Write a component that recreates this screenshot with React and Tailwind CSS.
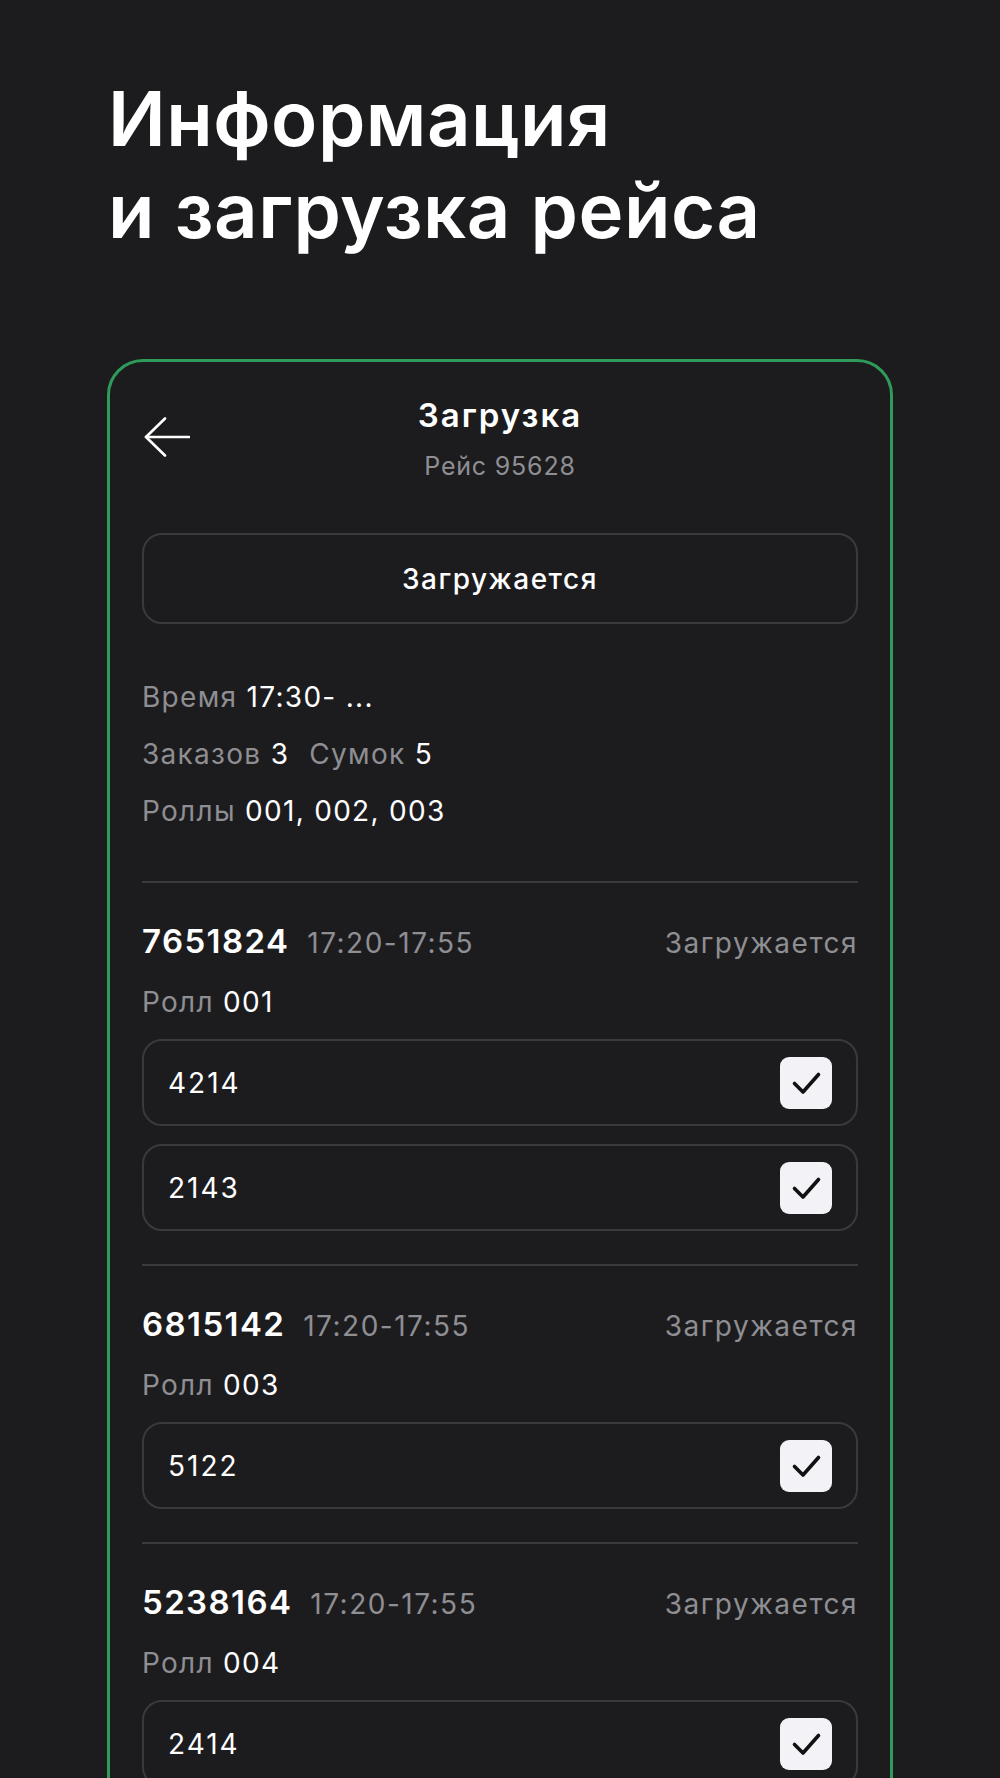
const orders = [
    { id: '7651824', time: '17:20-17:55', roll: '001', items: ['4214', '2143'] },
    { id: '6815142', time: '17:20-17:55', roll: '003', items: ['5122'] },
    { id: '5238164', time: '17:20-17:55', roll: '004', items: ['2414', '3121'] },
];

const BackArrow = () => (
    <svg width="48" height="40" viewBox="0 0 48 40" fill="none" stroke="white" strokeWidth="2.6" strokeLinecap="round" strokeLinejoin="round">
        <path d="M4 20H47" />
        <path d="M23 1.5L4 20L23 38.5" />
    </svg>
);

const CheckBox = () => (
    <div className="w-[52px] h-[52px] rounded-[9px] bg-[#f2f2f7] flex items-center justify-center shrink-0">
        <svg width="52" height="52" viewBox="0 0 52 52" fill="none" stroke="#111" strokeWidth="3.6" strokeLinecap="round" strokeLinejoin="round">
            <path d="M14.5 26.5L23 35L38.5 17.5" />
        </svg>
    </div>
);

const Order = ({ order }) => (
    <div className="border-t-2 border-[#3a3a3c] pt-[38px] pb-[33px]">
        {/* Order header */}
        <div className="flex items-baseline">
            <span className="text-[33px] leading-[40px] font-semibold tracking-[1.4px] text-white">{order.id}</span>
            <span className="ml-[18px] text-[28px] leading-[40px] tracking-[1.5px] text-[#8e8e93]">{order.time}</span>
            <span className="ml-auto text-[28px] leading-[40px] tracking-[1.5px] text-[#8e8e93]">Загружается</span>
        </div>
        <div className="mt-[19px] text-[28px] leading-[40px] tracking-[1.3px]">
            <span className="text-[#8e8e93]">Ролл </span>
            <span className="text-white">{order.roll}</span>
        </div>
        <div className="mt-[17px] flex flex-col gap-[18px]">
            {order.items.map((item) => (
                <div key={item} className="h-[87px] rounded-[20px] border-2 border-[#3a3a3c] flex items-center justify-between pl-[24px] pr-[24px]">
                    <span className="text-[28px] tracking-[2px] text-white">{item}</span>
                    <CheckBox />
                </div>
            ))}
        </div>
    </div>
);

export default function App() {
    return (
        <div className="w-[1000px] h-[1778px] overflow-hidden bg-[#1c1c1e] font-['Inter',sans-serif]">
            <div className="pl-[108px] pt-[72px]">
                <h1 className="text-[76px] leading-[92px] font-semibold text-white tracking-[0.5px]">
                    Информация
                    <br />
                    и загрузка рейса
                </h1>
            </div>

            <div className="mt-[103px] ml-[107px] w-[786px] rounded-[36px] border-[3px] border-[#2e9b5a] px-[32px] pt-[33px]">
                {/* Header */}
                <div className="grid grid-cols-[60px_1fr_60px] items-center">
                    <div className="flex items-center -mt-[4px]">
                        <BackArrow />
                    </div>
                    <div className="flex flex-col items-center">
                        <span className="text-[33px] leading-[40px] font-semibold tracking-[2px] text-white">Загрузка</span>
                        <span className="mt-[15px] text-[25px] leading-[32px] tracking-[0.8px] text-[#8e8e93]">Рейс 95628</span>
                    </div>
                    <div />
                </div>

                <button className="mt-[51px] w-full h-[91px] rounded-[20px] border-2 border-[#3a3a3c] text-[28px] font-medium tracking-[1.5px] text-white">
                    Загружается
                </button>

                {/* Trip info */}
                <div className="mt-[45px] mb-[41px] text-[28px] leading-[57px] tracking-[1.3px]">
                    <div>
                        <span className="text-[#8e8e93]">Время </span>
                        <span className="text-white">17:30- ...</span>
                    </div>
                    <div>
                        <span className="text-[#8e8e93]">Заказов </span>
                        <span className="text-white mr-[20px]">3</span>
                        <span className="text-[#8e8e93]">Сумок </span>
                        <span className="text-white">5</span>
                    </div>
                    <div>
                        <span className="text-[#8e8e93]">Роллы </span>
                        <span className="text-white">001, 002, 003</span>
                    </div>
                </div>

                {orders.map((o) => (
                    <Order key={o.id} order={o} />
                ))}
            </div>
        </div>
    );
}
